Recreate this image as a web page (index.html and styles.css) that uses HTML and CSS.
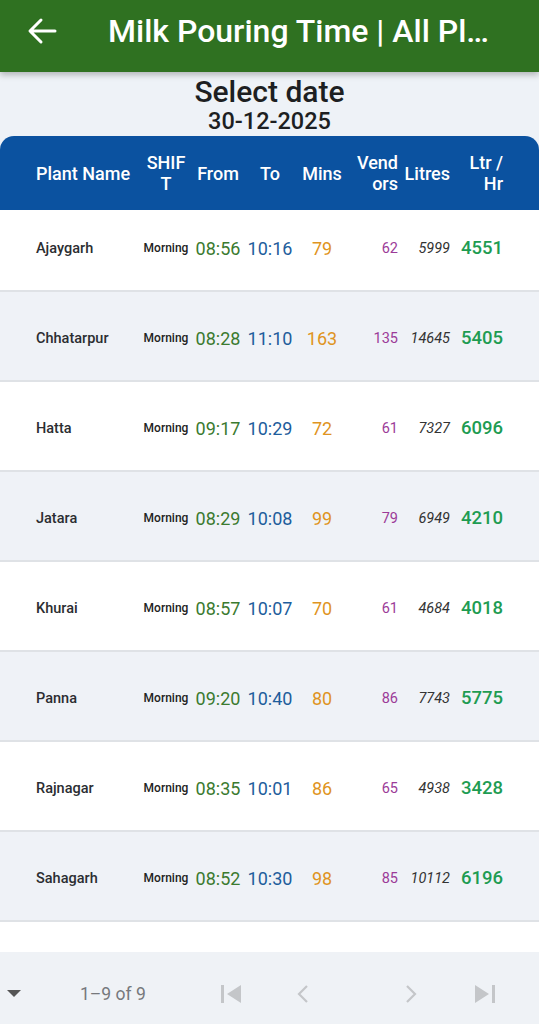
FILE: index.html
```html
<!DOCTYPE html>
<html lang="en">
<head>
    <meta charset="UTF-8">
    <meta name="viewport" content="width=device-width, initial-scale=1.0">
    <title>Milk Pouring Time | All Plants</title>
    <link rel="stylesheet" href="styles.css">
</head>
<body>

<div class="app">
    <header class="appbar">
        <svg class="back" width="32" height="32" viewBox="0 0 32 32">
            <path d="M29 16H5M15 5L4 16l11 11" fill="none" stroke="#fff" stroke-width="3" stroke-linecap="round" stroke-linejoin="round"/>
        </svg>
        <div class="title">Milk Pouring Time | All Plants Summary</div>
    </header>

    <div class="date-block">
        <div class="date-label">Select date</div>
        <div class="date-value">30-12-2025</div>
    </div>

    <div class="table">
        <div class="thead">
            <div class="th name">Plant Name</div>
            <div class="th shift">SHIFT</div>
            <div class="th center">From</div>
            <div class="th center">To</div>
            <div class="th center">Mins</div>
            <div class="th right vendors">Vendors</div>
            <div class="th right">Litres</div>
            <div class="th right rate">Ltr / Hr</div>
        </div>

        <div class="tbody">
            <div class="row">
                <div class="name">Ajaygarh</div>
                <div class="shift">Morning</div>
                <div class="from">08:56</div>
                <div class="to">10:16</div>
                <div class="mins">79</div>
                <div class="vendors">62</div>
                <div class="litres">5999</div>
                <div class="rate">4551</div>
            </div>
            <div class="row">
                <div class="name">Chhatarpur</div>
                <div class="shift">Morning</div>
                <div class="from">08:28</div>
                <div class="to">11:10</div>
                <div class="mins">163</div>
                <div class="vendors">135</div>
                <div class="litres">14645</div>
                <div class="rate">5405</div>
            </div>
            <div class="row">
                <div class="name">Hatta</div>
                <div class="shift">Morning</div>
                <div class="from">09:17</div>
                <div class="to">10:29</div>
                <div class="mins">72</div>
                <div class="vendors">61</div>
                <div class="litres">7327</div>
                <div class="rate">6096</div>
            </div>
            <div class="row">
                <div class="name">Jatara</div>
                <div class="shift">Morning</div>
                <div class="from">08:29</div>
                <div class="to">10:08</div>
                <div class="mins">99</div>
                <div class="vendors">79</div>
                <div class="litres">6949</div>
                <div class="rate">4210</div>
            </div>
            <div class="row">
                <div class="name">Khurai</div>
                <div class="shift">Morning</div>
                <div class="from">08:57</div>
                <div class="to">10:07</div>
                <div class="mins">70</div>
                <div class="vendors">61</div>
                <div class="litres">4684</div>
                <div class="rate">4018</div>
            </div>
            <div class="row">
                <div class="name">Panna</div>
                <div class="shift">Morning</div>
                <div class="from">09:20</div>
                <div class="to">10:40</div>
                <div class="mins">80</div>
                <div class="vendors">86</div>
                <div class="litres">7743</div>
                <div class="rate">5775</div>
            </div>
            <div class="row">
                <div class="name">Rajnagar</div>
                <div class="shift">Morning</div>
                <div class="from">08:35</div>
                <div class="to">10:01</div>
                <div class="mins">86</div>
                <div class="vendors">65</div>
                <div class="litres">4938</div>
                <div class="rate">3428</div>
            </div>
            <div class="row">
                <div class="name">Sahagarh</div>
                <div class="shift">Morning</div>
                <div class="from">08:52</div>
                <div class="to">10:30</div>
                <div class="mins">98</div>
                <div class="vendors">85</div>
                <div class="litres">10112</div>
                <div class="rate">6196</div>
            </div>
            <!-- ninth row sits under the pager -->
            <div class="row"></div>
        </div>

        <div class="pager">
            <svg class="size-menu" width="14" height="8" viewBox="0 0 14 8">
                <path d="M0 0h14L7 7z" fill="#555"/>
            </svg>
            <span class="count">1–9 of 9</span>
            <svg class="pg first" width="20" height="20" viewBox="0 0 20 20">
                <rect x="0" y="1" width="3" height="18" fill="#c4c6c9"/>
                <path d="M20 1v18L6 10z" fill="#c4c6c9"/>
            </svg>
            <svg class="pg prev" width="12" height="18" viewBox="0 0 12 18">
                <path d="M10 1L2 9l8 8" fill="none" stroke="#c4c6c9" stroke-width="2.2"/>
            </svg>
            <svg class="pg next" width="12" height="18" viewBox="0 0 12 18">
                <path d="M2 1l8 8-8 8" fill="none" stroke="#c4c6c9" stroke-width="2.2"/>
            </svg>
            <svg class="pg last" width="20" height="20" viewBox="0 0 20 20">
                <path d="M0 1v18l14-9z" fill="#c4c6c9"/>
                <rect x="17" y="1" width="3" height="18" fill="#c4c6c9"/>
            </svg>
        </div>
    </div>
</div>

</body>
</html>
```

FILE: styles.css
```css
body {
    margin: 0;
    font-family: Roboto, "Noto Sans", Arial, sans-serif;
    background-color: #eef2f7;
}
.app {
    height: 100vh;
    display: flex;
    flex-direction: column;
    overflow: hidden;
}

/* top bar */
.appbar {
    height: 72px;
    box-sizing: border-box;
    flex-shrink: 0;
    display: flex;
    align-items: center;
    padding: 0 36px 10px 26px;
    background-color: #2f7121;
    box-shadow: 0 3px 6px rgba(0, 0, 0, 0.25);
    position: relative;
    z-index: 2;
}
.back {
    flex-shrink: 0;
}
.title {
    margin-left: 50px;
    color: #fff;
    font-size: 32px;
    font-weight: 500;
    white-space: nowrap;
    overflow: hidden;
    text-overflow: ellipsis;
}

/* date */
.date-block {
    flex-shrink: 0;
    padding-top: 4px;
    padding-bottom: 2px;
    text-align: center;
    color: #1d1f22;
    font-weight: 500;
}
.date-label {
    font-size: 30px;
    line-height: 32px;
}
.date-value {
    font-size: 23.5px;
    line-height: 26px;
}

/* table */
.table {
    flex: 1;
    min-height: 0;
    display: flex;
    flex-direction: column;
}
.thead, .row {
    display: grid;
    grid-template-columns: 102px 56px 48px 56px 48px 52px 52px 53px;
    padding: 0 36px;
    align-items: center;
}
.thead {
    height: 74px;
    flex-shrink: 0;
    background-color: #0b52a0;
    border-radius: 14px 14px 0 0;
    color: #fff;
    font-size: 18px;
    font-weight: 500;
    line-height: 21px;
}
.th {
    word-break: break-all;
}
.th.center {
    text-align: center;
}
.th.right {
    text-align: right;
}
.th.shift {
    text-align: center;
    padding: 0 7px;
}
.th.vendors {
    padding-left: 8px;
}
.th.rate {
    padding-left: 14px;
    word-break: normal;
}

.tbody {
    flex: 1;
    min-height: 0;
    overflow: hidden;
}
.row {
    height: 90px;
    box-sizing: border-box;
    padding-top: 4px;
    border-bottom: 2px solid #dfe2e6;
    background-color: #fff;
}
.row:first-child {
    height: 82px;
    padding-bottom: 8px;
}
.row:nth-child(even) {
    background-color: #eff2f7;
}
.row .name {
    color: #2b2d31;
    font-size: 14.5px;
    font-weight: 500;
}
.row .shift {
    text-align: center;
    color: #222;
    font-size: 12px;
    font-weight: 500;
}
.row .from, .row .to, .row .mins {
    text-align: center;
    font-size: 18px;
}
.row .from {
    color: #3b7a2f;
}
.row .to {
    color: #1e5d9c;
}
.row .mins {
    color: #df9422;
}
.row .vendors {
    text-align: right;
    color: #9c3b98;
    font-size: 14.5px;
}
.row .litres {
    text-align: right;
    color: #333;
    font-size: 14.5px;
    font-style: italic;
}
.row .rate {
    text-align: right;
    color: #1e9c52;
    font-size: 18.5px;
    font-weight: 500;
}

/* pager */
.pager {
    height: 72px;
    box-sizing: border-box;
    flex-shrink: 0;
    display: flex;
    align-items: center;
    padding: 12px 0 0 7px;
    background-color: #eff2f6;
}
.count {
    margin-left: 59px;
    color: #76787c;
    font-size: 17.5px;
}
.pg.first {
    margin-left: 75px;
}
.pg.prev {
    margin-left: 56px;
}
.pg.next {
    margin-left: 96px;
}
.pg.last {
    margin-left: 58px;
}
```
